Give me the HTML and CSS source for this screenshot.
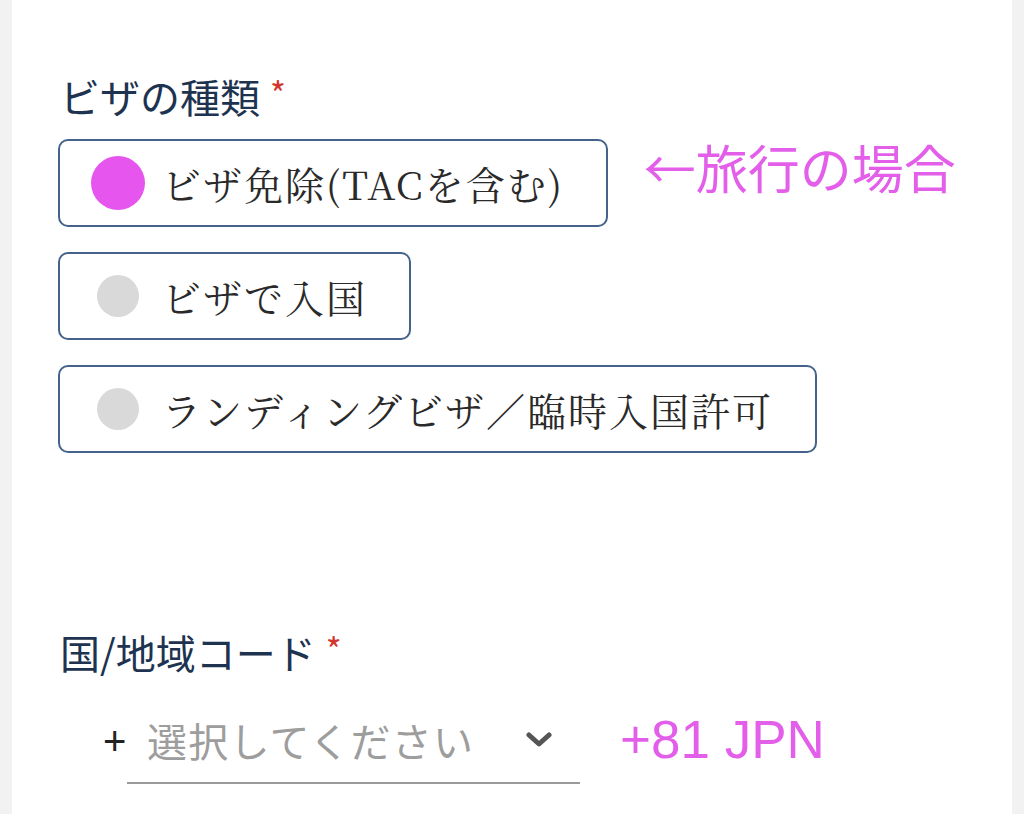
FILE: index.html
```html
<!DOCTYPE html>
<html lang="ja">
<head>
    <meta charset="UTF-8" />
    <meta name="viewport" content="width=device-width, initial-scale=1.0" />
    <title>ビザの種類</title>
    <link rel="stylesheet" href="styles.css">
</head>
<body>
<div class="panel">
    <!-- Visa type -->
    <div class="field visa">
        <div class="label">ビザの種類<span class="req">*</span></div>
        <div class="options">
            <div class="option-row">
                <label class="option">
                    <span class="dot-slot"><span class="dot checked"></span></span>
                    <span class="option-text">ビザ免除(TACを含む)</span>
                </label>
                <span class="note">←旅行の場合</span>
            </div>
            <div class="option-row">
                <label class="option">
                    <span class="dot-slot"><span class="dot"></span></span>
                    <span class="option-text">ビザで入国</span>
                </label>
            </div>
            <div class="option-row">
                <label class="option">
                    <span class="dot-slot"><span class="dot"></span></span>
                    <span class="option-text">ランディングビザ／臨時入国許可</span>
                </label>
            </div>
        </div>
    </div>

    <!-- Country code -->
    <div class="field code">
        <div class="label">国/地域コード<span class="req">*</span></div>
        <div class="code-row">
            <span class="plus">+</span>
            <div class="select">
                <span class="placeholder">選択してください</span>
                <svg class="chevron" width="26" height="16" viewBox="0 0 26 16">
                    <path d="M3 3 L13 12 L23 3" fill="none" stroke="#555" stroke-width="5" stroke-linecap="round" stroke-linejoin="round"/>
                </svg>
            </div>
            <span class="note big">+81 JPN</span>
        </div>
    </div>
</div>
</body>
</html>
```

FILE: styles.css
```css
html, body {
    margin: 0;
    height: 100%;
}
body {
    background: #f2f2f2;
    font-family: "Noto Sans CJK JP", "Noto Sans", sans-serif;
}
/* White form panel between the grey gutters */
.panel {
    margin: 0 12px;
    min-height: 100%;
    background: #fff;
    padding: 72px 0 0 48px;
    box-sizing: border-box;
}
.label {
    display: flex;
    align-items: flex-start;
    font-size: 40px;
    line-height: 48px;
    color: #1d3350;
}
.req {
    color: #d2362d;
    font-size: 34px;
    line-height: 34px;
    margin-left: 10px;
    margin-top: 4px;
}
/* Radio options */
.options {
    display: flex;
    flex-direction: column;
    gap: 25px;
    margin-top: 19px;
    margin-left: -2px;
}
.option-row {
    display: flex;
    align-items: center;
}
.option {
    display: inline-flex;
    align-items: center;
    height: 88px;
    box-sizing: border-box;
    border: 2px solid #45638a;
    border-radius: 10px;
    padding: 0 42px 0 30px;
}
.dot-slot {
    width: 56px;
    display: flex;
    justify-content: center;
    margin-right: 16px;
}
.dot {
    width: 42px;
    height: 42px;
    border-radius: 50%;
    background: #d9d9d9;
}
.dot.checked {
    width: 54px;
    height: 54px;
    background: #e656ee;
}
.option-text {
    font-family: "Noto Serif CJK JP", "Liberation Serif", "Noto Sans CJK JP", serif;
    font-size: 39px;
    letter-spacing: 2px;
    color: #2a2a2a;
}
.note {
    color: #e35fea;
    font-size: 52px;
    margin-left: 36px;
    margin-top: -34px;
}
/* Country code */
.code {
    margin-top: 175px;
}
.code-row {
    display: flex;
    align-items: center;
    margin-top: 22px;
    margin-left: 43px;
}
.plus {
    font-family: "Liberation Sans", sans-serif;
    font-size: 40px;
    color: #222;
    width: 24px;
}
.select {
    display: flex;
    align-items: center;
    justify-content: space-between;
    width: 453px;
    height: 86px;
    box-sizing: border-box;
    padding: 0 28px 0 20px;
    border-bottom: 2px solid #9a9a9a;
}
.placeholder {
    font-size: 40px;
    letter-spacing: 1.2px;
    color: #9d9d9d;
}
.note.big {
    font-family: "Liberation Sans", sans-serif;
    font-size: 53px;
    margin-left: 40px;
    margin-top: -4px;
}
```
